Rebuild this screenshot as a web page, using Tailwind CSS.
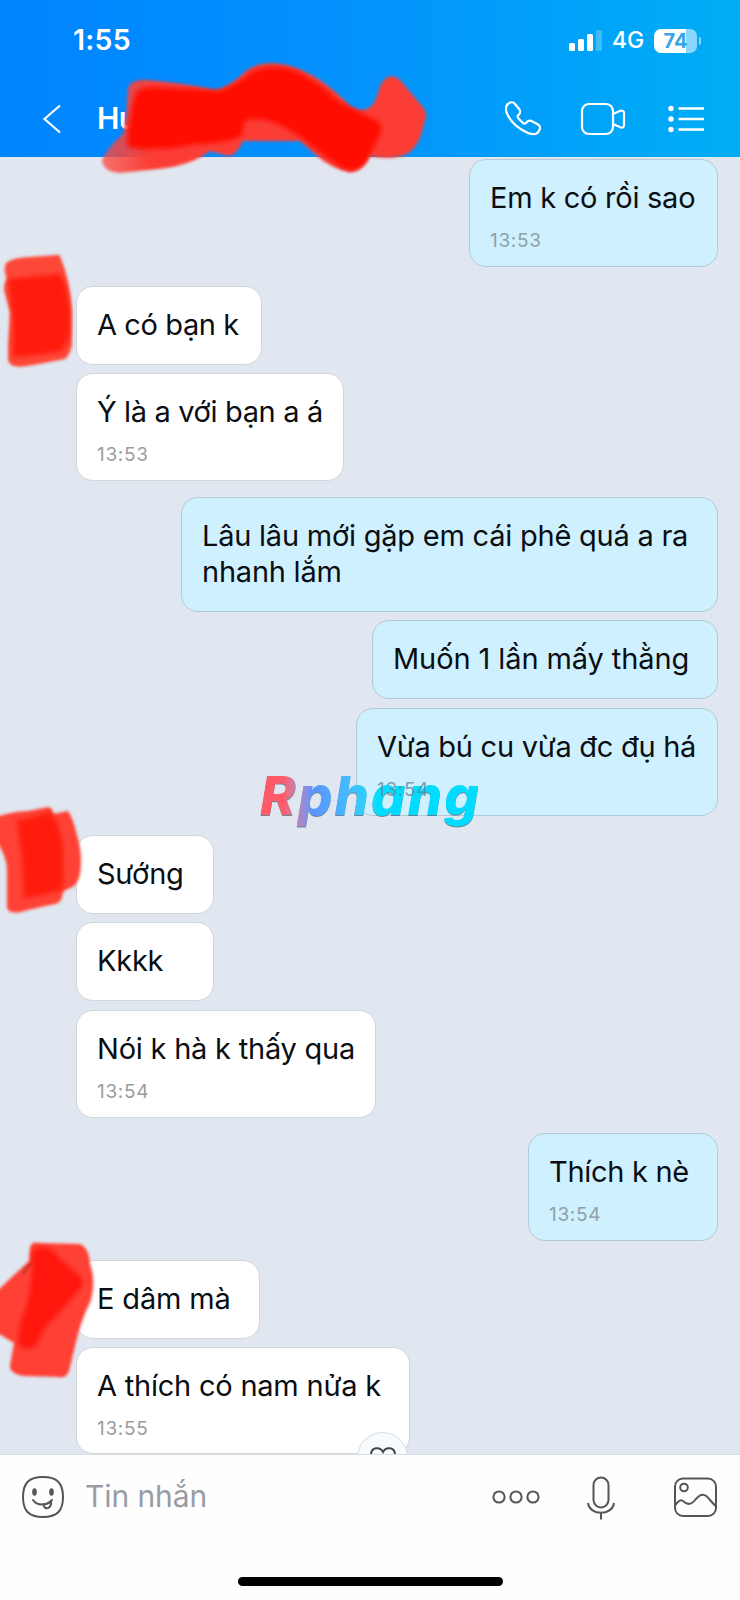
<!DOCTYPE html>
<html lang="vi">
<head>
<meta charset="utf-8">
<title>Chat</title>
<script src="https://cdn.jsdelivr.net/npm/@tailwindcss/browser@4"></script>
</head>
<body class="bg-white">
<div class="relative flex h-[1600px] w-[740px] flex-col overflow-hidden font-['Inter','Noto_Sans',sans-serif] text-[#0a0e12]">
  <header class="flex h-[157px] shrink-0 flex-col bg-linear-to-r from-[#0084ff] via-[#0593fd] to-[#00aef5] text-white">
    <div class="flex h-[80px] items-center pt-px pr-[39px] pl-[73px]">
      <span class="text-[28.5px] font-semibold tracking-[0.2px]">1:55</span>
      <svg class="ml-auto" width="34" height="22" viewBox="0 0 34 22" fill="#fff"><rect x="0" y="13" width="6" height="8" rx="1.5"/><rect x="9" y="9" width="6" height="12" rx="1.5"/><rect x="18" y="4" width="6" height="17" rx="1.5"/><rect x="27" y="0" width="6" height="21" rx="1.5" opacity=".25"/></svg>
      <span class="ml-[9px] text-[23px] font-medium tracking-[-0.2px]">4G</span>
      <div class="ml-[10px] flex items-center">
        <div class="flex h-[24px] w-[43px] items-center justify-center rounded-[7px] bg-linear-to-r from-white from-74% to-[#8ad6fc] to-74% text-[20px] font-bold text-[#36a5e8]">74</div>
        <div class="ml-[2px] h-[8px] w-[2px] rounded-r bg-[#8ad6fc]"></div>
      </div>
    </div>
    <div class="flex h-[77px] items-center pr-[36px] pl-[42px]">
      <svg width="20" height="30" viewBox="0 0 20 30" fill="none" stroke="#fff" stroke-width="2.2"><path d="M18 1.5 2.5 15 18 28.5"/></svg>
      <span class="ml-[35px] text-[30px] font-semibold tracking-[-0.5px]">Hu</span>
      <svg class="ml-auto" width="38" height="38" viewBox="0 0 38 38" fill="none" stroke="#fff" stroke-width="2.2" stroke-linejoin="round"><path d="M4.5 3.5C6.500 2 9.500 2 11 4L15.500 9.500C17 12 16.500 13 14.500 15C13 16 13.500 17 14.500 18.500L19 23C20.500 24 21.500 24 22.500 22.500C24 20.500 26 20 28.500 21.500L34 24.500C36.500 26 36.500 28.500 35 31C33 34.500 29 35 24 33C13 28 5.500 20 2.500 12.500C1.500 8.500 2 5 4.5 3.5Z"/></svg>
      <svg class="ml-[38px]" width="46" height="34" viewBox="0 0 46 34" fill="none" stroke="#fff" stroke-width="2.2" stroke-linejoin="round"><rect x="2" y="2" width="31" height="30" rx="7"/><path d="M33 12 41 8.500Q44 8.500 44 11V23Q44 26 41 25.500L33 22"/></svg>
      <svg class="ml-[41px]" width="37" height="30" viewBox="0 0 37 30" fill="none" stroke="#fff" stroke-width="2.3"><path d="M11.500 4.500H37M11.500 15H37M11.500 25.500H37"/><g fill="#fff" stroke="none"><circle cx="4" cy="4.500" r="2.700"/><circle cx="4" cy="15" r="2.700"/><circle cx="4" cy="25.500" r="2.700"/></g></svg>
    </div>
  </header>

  <main class="relative flex h-[1297px] shrink-0 flex-col overflow-hidden bg-[#e0e7f0] text-[29px] leading-[36px]">
    <div class="mt-[2px] mr-[22px] h-[108px] w-[249px] shrink-0 self-end rounded-[17px] border border-[#b3cad5] bg-[#cff0fe] pt-[20px] pl-[20px] whitespace-nowrap">
      <p class="tracking-[-0.26px]">Em k có rồi sao</p>
      <p class="mt-[13px] text-[19px] leading-[24px] tracking-[0.7px] text-[#8fa0a9]">13:53</p>
    </div>
    <div class="mt-[19px] ml-[76px] h-[79px] w-[186px] shrink-0 rounded-[17px] border border-[#d3d5d9] bg-white pt-[20px] pl-[20px] whitespace-nowrap">
      <p class="tracking-[-0.4px]">A có bạn k</p>
    </div>
    <div class="mt-[8px] ml-[76px] h-[108px] w-[268px] shrink-0 rounded-[17px] border border-[#d3d5d9] bg-white pt-[20px] pl-[20px] whitespace-nowrap">
      <p class="tracking-[-0.36px]">Ý là a với bạn a á</p>
      <p class="mt-[13px] text-[19px] leading-[24px] tracking-[0.7px] text-[#9c9c9c]">13:53</p>
    </div>
    <div class="mt-[16px] mr-[22px] h-[115px] w-[537px] shrink-0 self-end rounded-[17px] border border-[#b3cad5] bg-[#cff0fe] pt-[20px] pl-[20px] whitespace-nowrap">
      <p class="tracking-[-0.23px]">Lâu lâu mới gặp em cái phê quá a ra<br>nhanh lắm</p>
    </div>
    <div class="mt-[8px] mr-[22px] h-[79px] w-[346px] shrink-0 self-end rounded-[17px] border border-[#b3cad5] bg-[#cff0fe] pt-[20px] pl-[20px] whitespace-nowrap">
      <p class="tracking-[-0.1px]">Muốn 1 lần mấy thằng</p>
    </div>
    <div class="mt-[9px] mr-[22px] h-[108px] w-[362px] shrink-0 self-end rounded-[17px] border border-[#b3cad5] bg-[#cff0fe] pt-[20px] pl-[20px] whitespace-nowrap">
      <p class="tracking-[-0.27px]">Vừa bú cu vừa đc đụ há</p>
      <p class="relative z-20 mt-[13px] text-[19px] leading-[24px] tracking-[0.7px] text-[#5f8b99]/80">13:54</p>
    </div>
    <div class="mt-[19px] ml-[76px] h-[79px] w-[138px] shrink-0 rounded-[17px] border border-[#d3d5d9] bg-white pt-[20px] pl-[20px] whitespace-nowrap">
      <p class="tracking-[-0.25px]">Sướng</p>
    </div>
    <div class="mt-[8px] ml-[76px] h-[79px] w-[138px] shrink-0 rounded-[17px] border border-[#d3d5d9] bg-white pt-[20px] pl-[20px] whitespace-nowrap">
      <p class="tracking-[-0.25px]">Kkkk</p>
    </div>
    <div class="mt-[9px] ml-[76px] h-[108px] w-[300px] shrink-0 rounded-[17px] border border-[#d3d5d9] bg-white pt-[20px] pl-[20px] whitespace-nowrap">
      <p class="tracking-[-0.22px]">Nói k hà k thấy qua</p>
      <p class="mt-[13px] text-[19px] leading-[24px] tracking-[0.7px] text-[#9c9c9c]">13:54</p>
    </div>
    <div class="mt-[15px] mr-[22px] h-[108px] w-[190px] shrink-0 self-end rounded-[17px] border border-[#b3cad5] bg-[#cff0fe] pt-[20px] pl-[20px] whitespace-nowrap">
      <p class="tracking-[-0.3px]">Thích k nè</p>
      <p class="mt-[13px] text-[19px] leading-[24px] tracking-[0.7px] text-[#8fa0a9]">13:54</p>
    </div>
    <div class="mt-[19px] ml-[76px] h-[79px] w-[184px] shrink-0 rounded-[17px] border border-[#d3d5d9] bg-white pt-[20px] pl-[20px] whitespace-nowrap">
      <p class="tracking-[-0.15px]">E dâm mà</p>
    </div>
    <div class="relative mt-[8px] ml-[76px] h-[107px] w-[334px] shrink-0 rounded-[17px] border border-[#d3d5d9] bg-white pt-[20px] pl-[20px] whitespace-nowrap">
      <p class="tracking-[-0.22px]">A thích có nam nửa k</p>
      <p class="mt-[13px] text-[19px] leading-[24px] tracking-[0.7px] text-[#9c9c9c]">13:55</p>
      <div class="absolute top-[84px] right-[1px] flex h-[51px] w-[51px] justify-center rounded-full border border-[#d5dce0] bg-[#f8fbfd] pt-[14px]">
        <svg width="28" height="25" viewBox="0 0 28 25" fill="none" stroke="#444" stroke-width="2"><path d="M14 5C11-.5 2-.2 2 8c0 7 8 12 12 15 4-3 12-8 12-15 0-8.200-9-8.500-12-3Z"/></svg>
      </div>
    </div>
    <div class="absolute top-[604px] left-[260px] z-10 bg-linear-to-r from-[#ff5a66] from-10% via-[#5b92ff] via-23% to-[#00dcff] to-52% bg-clip-text pr-[6px] text-[54px] leading-[70px] font-extrabold tracking-[2.2px] text-transparent italic drop-shadow-[0_1.5px_0_rgba(75,110,130,0.8)]">Rphang</div>
  </main>

  <footer class="flex h-[146px] shrink-0 flex-col border-t border-[#d8dde2] bg-[#fefefe]">
    <div class="flex h-[83px] items-center pr-[23px] pl-[22px]">
      <svg width="42" height="42" viewBox="0 0 42 42" fill="none" stroke="#555" stroke-width="2"><path d="M21 1C35 1 41 7 41 21S35 41 21 41 1 35 1 21 7 1 21 1Z"/><path d="M11 24C15 30 25 30 30 24M21.500 28C22 35 30 33 29 25" stroke-linecap="round"/><g fill="#555" stroke="none"><ellipse cx="12.500" cy="16" rx="2.300" ry="3.800"/><ellipse cx="29.500" cy="16" rx="2.300" ry="3.800"/></g></svg>
      <span class="ml-[21px] text-[30px] tracking-[-0.1px] text-[#969da3]">Tin nhắn</span>
      <svg class="ml-auto" width="48" height="14" viewBox="0 0 48 14" fill="none" stroke="#555" stroke-width="2"><circle cx="7" cy="7" r="5.600"/><circle cx="24" cy="7" r="5.600"/><circle cx="41" cy="7" r="5.600"/></svg>
      <svg class="ml-[47px] mt-[2px]" width="28" height="44" viewBox="0 0 28 44" fill="none" stroke="#555" stroke-width="2"><rect x="6.500" y="1.500" width="15" height="30" rx="7.500"/><path d="M1 27C3 40 25 40 27 27M14 37.500V43.500"/></svg>
      <svg class="ml-[59px]" width="43" height="40" viewBox="0 0 43 40" fill="none" stroke="#555" stroke-width="2"><rect x="1" y="1.500" width="41" height="37.500" rx="8"/><circle cx="10" cy="10.500" r="3.800"/><path d="M1.500 28C6 21.500 8 22.500 11 25.500 15 28.500 18 27 21.500 22.500 27 16 31 16 36 23L41.500 29"/></svg>
    </div>
    <div class="mx-auto mt-[39px] h-[9px] w-[265px] rounded-full bg-black"></div>
  </footer>

  <!-- marker strokes drawn over the name and the avatars -->
  <svg class="pointer-events-none absolute inset-0 z-30" width="740" height="1600" viewBox="0 0 740 1600">
    <defs>
      <filter id="soft" x="-10%" y="-10%" width="120%" height="120%"><feGaussianBlur stdDeviation="1.5"/></filter>
      <filter id="edge" x="-10%" y="-10%" width="120%" height="120%"><feGaussianBlur stdDeviation="2.200"/></filter>
      <linearGradient id="fade" gradientUnits="userSpaceOnUse" x1="105" y1="0" x2="150" y2="0"><stop offset="0" stop-color="#fb463e" stop-opacity=".75"/><stop offset="1" stop-color="#fb3e36"/></linearGradient>
    </defs>
    <g filter="url(#soft)">
      <path fill="url(#fade)" d="M128 88Q131 79 146 80Q185 83 215 90Q230 87 247 70Q263 60 287 65Q320 74 350 106Q360 113 369 108Q376 104 380 86Q388 70 400 80L422 106Q429 114 424 123Q419 151 402 156Q387 160 370 156Q361 173 349 172Q330 168 316 155L300 141H243Q236 156 228 156L210 151Q190 166 158 169L120 173Q103 172 102 160Q107 148 123 134L126 115Z"/>
      <path fill="#ff422f" fill-opacity=".96" d="M6 263Q14 257 30 257L57 255Q60 254 61 259Q70 280 72 310V345Q70 355 65 359Q45 363 27 366Q10 369 8 360V345L10 312L4 290Q4 282 7 279Q3 270 6 263Z"/>
      <path fill="#ff4336" d="M-6 818Q12 811 28 811L48 807Q53 808 53 814L68 811Q73 818 77 835Q83 855 80 874Q78 886 68 889Q62 890 62 898Q60 904 50 905L28 910Q10 916 7 908V870Q7 855 -6 838Z"/>
      <path fill="#ff4035" d="M30 1249Q30 1241 40 1243L80 1244Q89 1248 90 1264Q96 1280 91 1300Q80 1323 76 1342L69 1371Q66 1379 58 1377L25 1376Q10 1374 10 1366L14 1343L-6 1331V1294L29 1261Z"/>
      <path d="M23 1274Q27 1266 33 1262" stroke="#6c2028" stroke-width="1.500" fill="none"/>
    </g>
    <g filter="url(#edge)" fill="#ff0a02">
      <path d="M136 92Q145 86 163 88L220 91Q238 84 251 73Q264 65 283 68Q307 72 338 101L375 120Q383 124 381 132L366 162Q355 175 342 168L312 146Q270 112 244 121L242 136Q220 144 196 144Q155 152 128 147Q126 130 136 92Z"/>
      <path fill="#ff1a0e" d="M8 279L60 274Q70 290 70 325Q70 342 61 351Q36 356 13 357V320Z"/>
      <path fill="#ff1a0e" d="M17 821L51 812Q62 830 63 850V889Q46 895 24 898L22 857Z"/>
      <path fill="#ff170c" d="M32 1252Q45 1240 58 1257L80 1277Q85 1283 77 1292L56 1316Q40 1330 37 1344Q28 1353 18 1344L20 1325Q35 1290 32 1252Z"/>
    </g>
  </svg>
</div>
</body>
</html>
